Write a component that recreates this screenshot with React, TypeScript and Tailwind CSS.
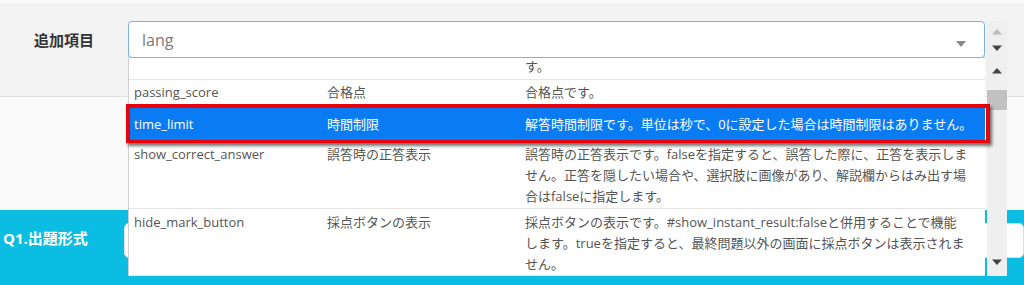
import React from "react";

type Row = {
  key: string;
  name: string;
  lines: string[];
  className: string;
  active?: boolean;
};

// the list is scrolled: only the tail of the previous row's description shows at the top
const rows: Row[] = [
  { key: "prev", name: "", lines: ["す。"], className: "pt-0 pb-[5px] leading-[16px]" },
  { key: "passing_score", name: "合格点", lines: ["合格点です。"], className: "pt-[2px] pb-[2px] leading-[21px]" },
  {
    key: "time_limit",
    name: "時間制限",
    lines: ["解答時間制限です。単位は秒で、0に設定した場合は時間制限はありません。"],
    className: "pt-[8px] pb-[5px] leading-[21px]",
    active: true,
  },
  {
    key: "show_correct_answer",
    name: "誤答時の正答表示",
    lines: [
      "誤答時の正答表示です。falseを指定すると、誤答した際に、正答を表示しま",
      "せん。正答を隠したい場合や、選択肢に画像があり、解説欄からはみ出す場",
      "合はfalseに指定します。",
    ],
    className: "pt-[3px] pb-[1px] leading-[21px]",
  },
  {
    key: "hide_mark_button",
    name: "採点ボタンの表示",
    lines: [
      "採点ボタンの表示です。#show_instant_result:falseと併用することで機能",
      "します。trueを指定すると、最終問題以外の画面に採点ボタンは表示されま",
      "せん。",
    ],
    className: "pt-[3px] pb-[0px] leading-[21px]",
  },
];

const Tri = ({ up, color }: { up?: boolean; color: string }) => (
  <svg width="12" height="7" viewBox="0 0 12 7" className="block">
    <polygon points={up ? "1,6.5 11,6.5 6,1" : "1,0.5 11,0.5 6,6"} fill={color} />
  </svg>
);

export default function App() {
  return (
    <div className="w-[1024px] h-[285px] overflow-hidden font-['Open_Sans','Noto_Sans_CJK_JP',sans-serif]">
      <div className="h-[97px] bg-[#f3f3f3] border-t-[3px] border-t-[#f9f9f9] border-b border-b-[#e2e2e2] flex items-start">
        <div className="w-[128px] pl-[34px] pt-[27px] text-[15px] leading-[20px] font-bold text-[#333]">追加項目</div>
        <div className="relative z-10 mt-[18px] w-[857px] h-[37px]">
          <div className="h-full bg-white border border-[#7fb2e2] rounded-[4px] shadow-[0_2px_0_#b7d7f3] flex items-center pl-[13px] pr-[18px]">
            <span className="flex-1 text-[16px] text-[#7a7a7a] leading-[20px]">lang</span>
            <svg width="10" height="6" viewBox="0 0 10 6" className="mt-[8px]">
              <polygon points="0,0 10,0 5,6" fill="#8a8a8a" />
            </svg>
          </div>

          <div className="absolute left-0 top-[37px] w-[857px] h-[218px] bg-white border-l border-[#cfcfcf] overflow-hidden">
            {rows.map((r) => (
              <div
                key={r.key}
                className={`${r.active ? "bg-[#0a7cf3] text-white" : "text-[#555]"} ${r.className} border-b border-[#e6e6e6] flex pl-[5px] text-[13px]`}
              >
                <div className="w-[193px] shrink-0 whitespace-nowrap">{r.key === "prev" ? "" : r.key}</div>
                <div className="w-[198px] shrink-0 whitespace-nowrap">{r.name}</div>
                <div className="flex-1 whitespace-nowrap">
                  {r.lines.map((l) => (
                    <div key={l}>{l}</div>
                  ))}
                </div>
              </div>
            ))}
          </div>

          <div className="absolute left-[859px] top-0 w-[20px] h-[255px] bg-[#efefef] flex flex-col items-center">
            <div className="mt-[7px]">
              <Tri up color="#bdbdbd" />
            </div>
            <div className="mt-[10px]">
              <Tri color="#444" />
            </div>
            <div className="mt-[15px]">
              <Tri up color="#444" />
            </div>
            <div className="mt-[16px] w-full h-[20px] bg-[#c1c1c1]" />
            <div className="mt-auto mb-[10px]">
              <Tri color="#444" />
            </div>
          </div>

          <div className="absolute -left-[2px] top-[83px] w-[864px] h-[39px] border-[4px] border-[#e8000b] border-b-[3px] shadow-[2px_3px_3px_rgba(0,0,0,0.55)]" />
        </div>
      </div>

      <div className="h-[113px] bg-[#fafafa]" />

      <div className="h-[75px] bg-[#0bbde2] flex items-start">
        <div className="w-[124px] pl-[3px] pt-[18px] text-[15px] leading-[20px] font-bold text-white">Q1.出題形式</div>
        <div className="mt-[13px] flex-1 h-[35px] bg-white rounded-[5px] border border-[#dcdcdc]" />
      </div>
    </div>
  );
}
